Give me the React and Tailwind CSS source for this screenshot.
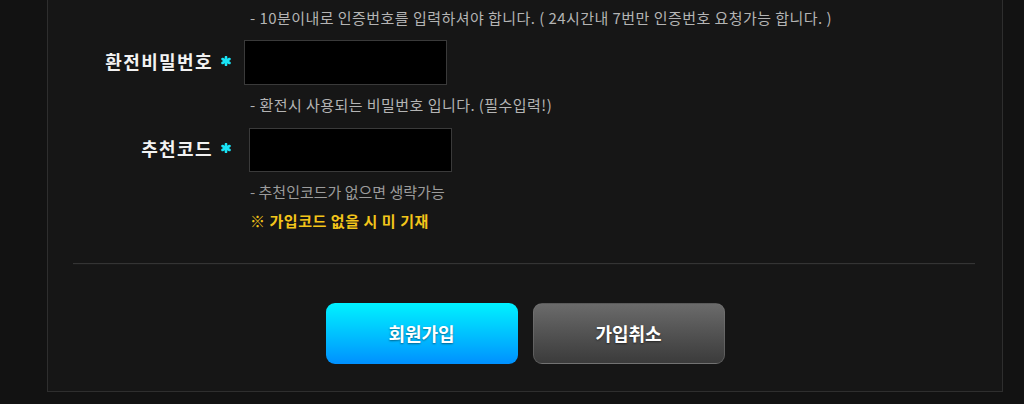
import React from "react";

const font = { fontFamily: '"Noto Sans CJK KR", "Noto Sans", sans-serif' };

function Star() {
    // 작은 하늘색 별표
    return (
        <svg width="10" height="10" viewBox="0 0 10 10" className="ml-[8px] shrink-0">
            <g stroke="#19e3f5" strokeWidth="2.6" strokeLinecap="round">
                <line x1="5" y1="1" x2="5" y2="9" />
                <line x1="1.5" y1="3" x2="8.5" y2="7" />
                <line x1="1.5" y1="7" x2="8.5" y2="3" />
            </g>
        </svg>
    );
}

function Field({ label, inputClass }) {
    return (
        <div className="flex items-center">
            <div className="w-[183px] pb-[4px] flex justify-end items-center">
                <span className="text-[18px] font-bold text-[#f2f2f2] leading-none tracking-[1.4px]">{label}</span>
                <Star />
            </div>
            <div className={inputClass}></div>
        </div>
    );
}

export default function App() {
    return (
        <div className="w-full h-[404px] bg-[#121212] overflow-hidden" style={font}>
            <div className="ml-[47px] w-[956px] h-[392px] bg-[#161616] border-x border-b border-[#2e2e2e]">
                <div className="pl-[202px] pt-[8px] h-[28px] text-[15px] leading-[20px] tracking-[0.45px] text-[#b4b4b4] whitespace-nowrap">
                    - 10분이내로 인증번호를 입력하셔야 합니다. ( 24시간내 7번만 인증번호 요청가능 합니다. )
                </div>

                <div className="mt-[12px]">
                    <Field
                        label="환전비밀번호"
                        inputClass="ml-[13px] w-[203px] h-[45px] bg-black border border-[#3a3a3a]"
                    />
                </div>

                <div className="mt-[10px] pl-[202px] text-[15px] leading-[20px] tracking-[0.45px] text-[#b4b4b4]">
                    - 환전시 사용되는 비밀번호 입니다. (필수입력!)
                </div>

                <div className="mt-[13px]">
                    <Field
                        label="추천코드"
                        inputClass="ml-[18px] w-[203px] h-[44px] bg-black border border-[#3a3a3a]"
                    />
                </div>

                <div className="mt-[10px] pl-[202px] text-[15px] leading-[20px] text-[#9c9c9c]">
                    - 추천인코드가 없으면 생략가능
                </div>
                <div className="mt-[9px] pl-[202px] text-[15px] leading-[20px] tracking-[0.55px] font-bold text-[#f3c51a]">
                    ※ 가입코드 없을 시 미 기재
                </div>

                <div className="mt-[32px] ml-[25px] mr-[27px] h-[2px] bg-[#343434] border-b border-[#1a1a1a]"></div>

                <div className="mt-[38px] flex justify-center gap-[15px]">
                    <button className="w-[192px] h-[61px] rounded-[9px] bg-gradient-to-b from-[#00f2ff] to-[#0090ff] text-white text-[18px] font-bold [text-shadow:0_1px_2px_rgba(0,0,0,0.45)]">
                        회원가입
                    </button>
                    <button className="w-[192px] h-[61px] rounded-[9px] bg-gradient-to-b from-[#6b6b6b] to-[#3b3b3b] border border-[#7a7a7a]/50 text-white text-[18px] font-bold [text-shadow:0_1px_2px_rgba(0,0,0,0.5)]">
                        가입취소
                    </button>
                </div>
            </div>
        </div>
    );
}
